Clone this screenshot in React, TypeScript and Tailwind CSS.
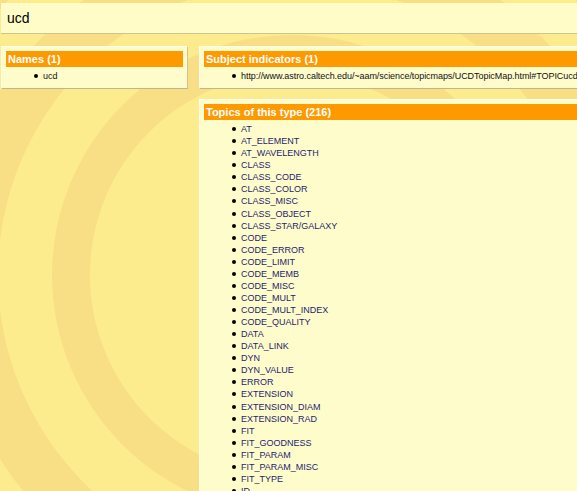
const topics = [
  "AT",
  "AT_ELEMENT",
  "AT_WAVELENGTH",
  "CLASS",
  "CLASS_CODE",
  "CLASS_COLOR",
  "CLASS_MISC",
  "CLASS_OBJECT",
  "CLASS_STAR/GALAXY",
  "CODE",
  "CODE_ERROR",
  "CODE_LIMIT",
  "CODE_MEMB",
  "CODE_MISC",
  "CODE_MULT",
  "CODE_MULT_INDEX",
  "CODE_QUALITY",
  "DATA",
  "DATA_LINK",
  "DYN",
  "DYN_VALUE",
  "ERROR",
  "EXTENSION",
  "EXTENSION_DIAM",
  "EXTENSION_RAD",
  "FIT",
  "FIT_GOODNESS",
  "FIT_PARAM",
  "FIT_PARAM_MISC",
  "FIT_TYPE",
  "ID",
  "ID_ALTERNATIVE",
];

function Backdrop() {
  // concentric rings behind everything
  return (
    <svg
      className="pointer-events-none absolute inset-0"
      width="577"
      height="491"
      viewBox="0 0 577 491"
    >
      <rect width="577" height="491" fill="#f8df85" />
      <circle cx="292" cy="275" r="395" fill="#fdec8d" />
      <circle cx="292" cy="275" r="345" fill="#f8df85" />
      <circle cx="292" cy="275" r="294" fill="#fdec8d" />
      <circle cx="292" cy="275" r="240" fill="#f8df85" />
      <circle cx="292" cy="275" r="202" fill="#fdec8d" />
    </svg>
  );
}

function Panel({
  title,
  className = "",
  children,
}: {
  title: string;
  className?: string;
  children: React.ReactNode;
}) {
  return (
    <div
      className={`border-t border-l border-t-[#fffff0] border-l-[#fffff0] border-r border-b border-r-[#cfc59a] border-b-[#bfb68c] bg-[#fffccc] px-[4px] pt-[4px] pb-[6px] ${className}`}
    >
      <div className="h-[16px] bg-[#ff9900] px-[2px] text-[11px] leading-[16px] font-bold text-white">
        {title}
      </div>
      <ul className="mt-[3px] pl-[28px]">{children}</ul>
    </div>
  );
}

function Item({
  text,
  link = false,
  tight = false,
}: {
  text: string;
  link?: boolean;
  tight?: boolean;
}) {
  return (
    <li className="flex h-[12.07px] items-center whitespace-nowrap text-[9px] leading-[12px]">
      <span className="mr-[5px] h-[4px] w-[4px] shrink-0 rounded-full bg-black" />
      <span
        className={`${link ? "text-[#1d1d6e]" : "text-[#111]"} ${
          tight ? "tracking-[-0.06px]" : ""
        }`}
      >
        {text}
      </span>
    </li>
  );
}

export default function App() {
  return (
    <div
      className="relative h-[491px] w-[577px] overflow-hidden"
      style={{ fontFamily: '"Liberation Sans", Arial, sans-serif' }}
    >
      <Backdrop />
      <div className="relative pt-[3px] pl-[1px]">
        <div className="flex h-[31px] w-[620px] items-center border-b border-r border-b-[#c9c29c] border-r-[#c9c29c] bg-[#fffcc8] px-[6px] text-[14px] text-black">
          ucd
        </div>
        <div className="mt-[12px] flex items-start gap-[11px]">
          <Panel title="Names (1)" className="w-[187px] shrink-0">
            <Item text="ucd" />
          </Panel>
          <div className="flex w-[400px] shrink-0 flex-col gap-[10px]">
            <Panel title="Subject indicators (1)">
              <Item
                text="http://www.astro.caltech.edu/~aam/science/topicmaps/UCDTopicMap.html#TOPICucd"
                tight
              />
            </Panel>
            <Panel title="Topics of this type (216)">
              {topics.map((t) => (
                <Item key={t} text={t} link />
              ))}
            </Panel>
          </div>
        </div>
      </div>
    </div>
  );
}
